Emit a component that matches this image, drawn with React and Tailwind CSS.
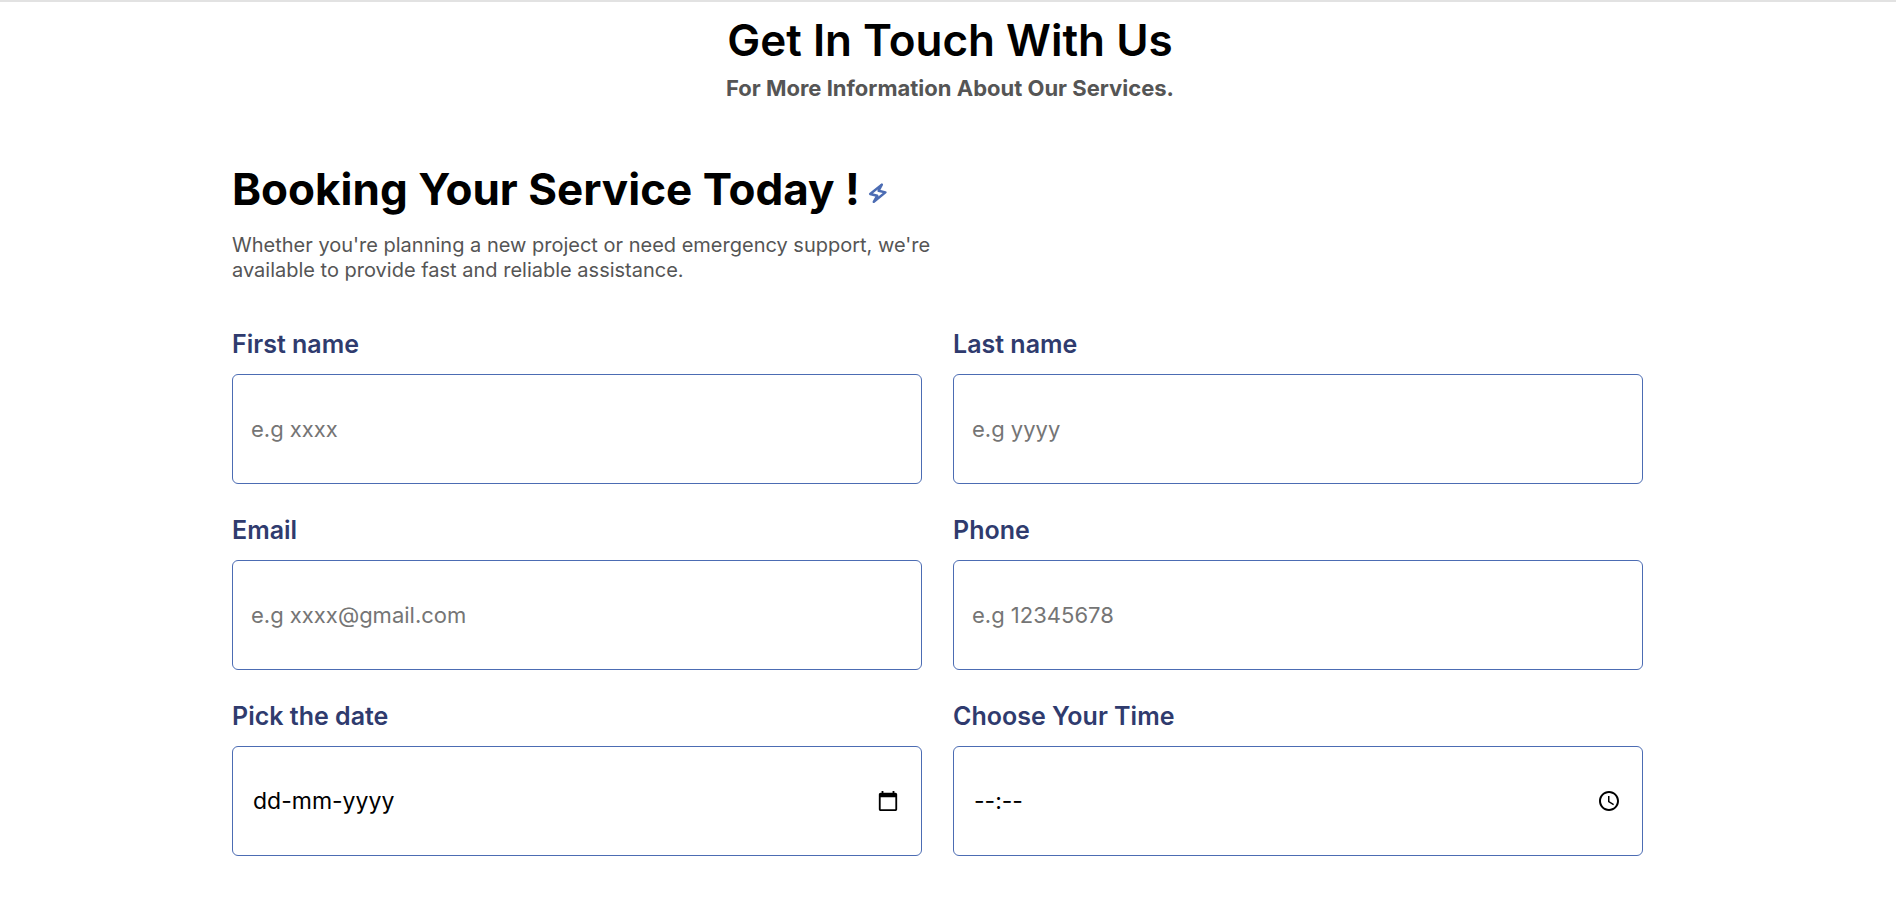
import React from "react";

function BoltIcon() {
  return (
    <svg viewBox="0 0 20 22" className="mt-2 h-[22px] w-5" fill="none" stroke="#4c6cb3" strokeWidth="2.5" strokeLinejoin="round" aria-hidden="true">
      <path d="M13.8 2.600 2.200 12 9.200 13.800 5.800 19.800 17.400 10.400 10.600 8.800Z" />
    </svg>
  );
}

function CalendarIcon() {
  return (
    <svg viewBox="0 0 24 24" className="size-[22px]" fill="currentColor" aria-hidden="true">
      <path d="M20 3h-1V1h-2v2H7V1H5v2H4c-1.1 0-2 .9-2 2v16c0 1.100.9 2 2 2h16c1.100 0 2-.9 2-2V5c0-1.100-.9-2-2-2zm0 18H4V8h16v13z" />
    </svg>
  );
}

function ClockIcon() {
  return (
    <svg viewBox="1 1 22 22" className="size-[22px]" fill="currentColor" aria-hidden="true">
      <path d="M11.99 2C6.470 2 2 6.480 2 12s4.470 10 9.990 10C17.520 22 22 17.520 22 12S17.520 2 11.990 2zM12 20c-4.420 0-8-3.580-8-8s3.580-8 8-8 8 3.580 8 8-3.580 8-8 8zm.5-13H11v6l5.250 3.150.75-1.230-4.500-2.670z" />
    </svg>
  );
}

const fieldLabel = "text-[25px] leading-[30px] font-semibold text-[#2f3b6e]";
const fieldBox = "flex h-[110px] items-center rounded-md border border-[#4c6cb3] bg-white";

function Field({ id, label, type, placeholder }) {
  return (
    <div className="flex flex-col gap-[15px]">
      <label htmlFor={id} className={fieldLabel}>{label}</label>
      <div className={fieldBox}>
        <input
          id={id}
          type={type}
          placeholder={placeholder}
          className="h-full w-full rounded-md bg-transparent px-[18px] text-[22px] text-black outline-none placeholder:text-[#757575]"
        />
      </div>
    </div>
  );
}

function PickerField({ id, label, placeholder, action, children }) {
  return (
    <div className="flex flex-col gap-[15px]">
      <label htmlFor={id} className={fieldLabel}>{label}</label>
      <div className={fieldBox}>
        <input
          id={id}
          type="text"
          inputMode="numeric"
          placeholder={placeholder}
          className="h-full min-w-0 flex-1 rounded-md bg-transparent pl-5 text-[23px] text-black outline-none placeholder:text-black"
        />
        <button type="button" aria-label={action} className="mr-[22px] text-black">
          {children}
        </button>
      </div>
    </div>
  );
}

export default function App() {
  return (
    <main className="min-h-screen border-t-2 border-[#e2e2e2] bg-white pb-16 font-['Inter',sans-serif]">
      <header className="flex flex-col items-center pt-3 pl-1 text-center">
        <h1 className="text-[44px] leading-[52px] font-semibold text-black">Get In Touch With Us</h1>
        <p className="mt-2 text-[22px] leading-7 font-bold text-[#555]">For More Information About Our Services.</p>
      </header>

      <section className="mt-[61px] pr-[253px] pl-[232px]">
        <div className="flex items-center gap-2">
          <h2 className="text-[44px] leading-[52px] font-bold text-black">Booking Your Service Today !</h2>
          <BoltIcon />
        </div>
        <p className="mt-[18px] max-w-[730px] text-[20px] leading-[25px] text-[#555]">
          Whether you're planning a new project or need emergency support, we're available to provide fast and reliable assistance.
        </p>

        <form className="mt-[46px] grid grid-cols-2 gap-x-[31px] gap-y-[31px]">
          <Field id="first-name" label="First name" type="text" placeholder="e.g xxxx" />
          <Field id="last-name" label="Last name" type="text" placeholder="e.g yyyy" />
          <Field id="email" label="Email" type="email" placeholder="e.g xxxx@gmail.com" />
          <Field id="phone" label="Phone" type="tel" placeholder="e.g 12345678" />
          <PickerField id="date" label="Pick the date" placeholder="dd-mm-yyyy" action="Open calendar">
            <CalendarIcon />
          </PickerField>
          <PickerField id="time" label="Choose Your Time" placeholder="--:--" action="Open time picker">
            <ClockIcon />
          </PickerField>
        </form>
      </section>
    </main>
  );
}
